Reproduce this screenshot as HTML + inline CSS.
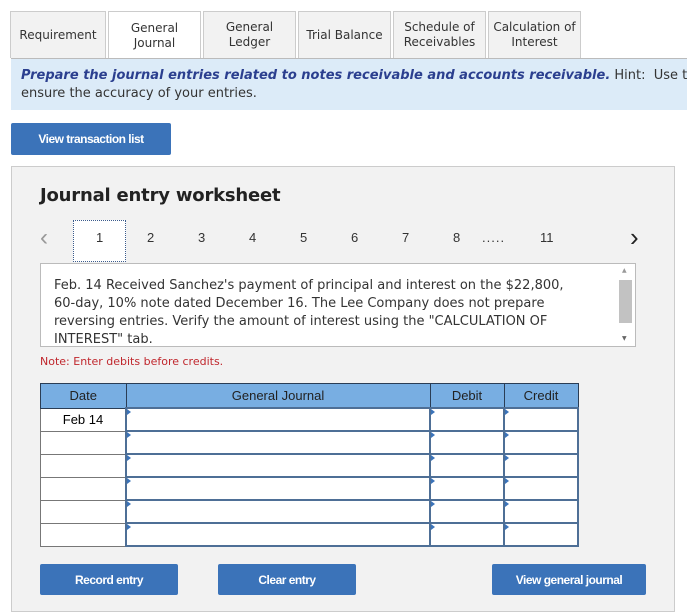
<!DOCTYPE html>
<html><head><style>
body{margin:0;width:687px;height:615px;background:#fff;font-family:"DejaVu Sans","Liberation Sans",sans-serif;position:relative;overflow:hidden}
.a{position:absolute}
.tab{position:absolute;top:11px;height:47px;background:#f2f2f2;border:1px solid #ccc;border-bottom:none;box-sizing:border-box;font-size:12px;color:#333;display:flex;align-items:center;justify-content:center;text-align:center;line-height:15px}
.btn{position:absolute;background:#3b73b9;color:#fff;font-family:"Liberation Sans",sans-serif;font-weight:bold;font-size:12px;letter-spacing:-0.5px;display:flex;align-items:center;justify-content:center;border-radius:2px}
.pg{position:absolute;top:230px;font-family:"Liberation Sans",sans-serif;font-size:13px;color:#333}
table{position:absolute;left:40px;top:383px;border-collapse:collapse;font-family:"Liberation Sans",sans-serif;font-size:13px}
td,th{padding:0;height:21px}
th{background:#78aee2;font-weight:normal;color:#222;border:1px solid #2a3d55;height:23px}
td.d{border:1px solid #777;background:#fff;text-align:center;width:84px}
td.i{border:2px solid #4e6f96;background:#fff;position:relative}
td.i:before{content:"";position:absolute;left:0;top:0;border-left:4px solid #3b73b9;border-top:3px solid transparent;border-bottom:3px solid transparent}
</style></head><body>
<div class="tab" style="left:10px;width:96px">Requirement</div>
<div class="tab" style="left:108px;width:93px;background:#fff;height:48px">General<br>Journal</div>
<div class="tab" style="left:203px;width:93px">General<br>Ledger</div>
<div class="tab" style="left:298px;width:93px">Trial Balance</div>
<div class="tab" style="left:393px;width:93px">Schedule of<br>Receivables</div>
<div class="tab" style="left:488px;width:93px">Calculation of<br>Interest</div>
<div class="a" style="left:11px;top:58px;width:676px;height:52px;background:#dcebf8;border-top:1px solid #bbb;box-sizing:border-box"></div>
<div class="a" style="left:21px;top:67px;font-size:13px;line-height:18px;color:#333;white-space:nowrap"><b><i style="color:#2b3f8f">Prepare the journal entries related to notes receivable and accounts receivable.</i></b> Hint:&nbsp; Use the<br>ensure the accuracy of your entries.</div>
<div class="btn" style="left:11px;top:123px;width:160px;height:32px">View transaction list</div>
<div class="a" style="left:11px;top:166px;width:664px;height:446px;background:#f2f2f2;border:1px solid #ccc;box-sizing:border-box"></div>
<div class="a" style="left:40px;top:185px;font-size:18px;font-weight:bold;color:#222;letter-spacing:-0.2px">Journal entry worksheet</div>
<div class="a" style="left:40px;top:224px;font-size:24px;color:#999;font-family:'Liberation Sans',sans-serif">‹</div>
<div class="a" style="left:73px;top:220px;width:53px;height:42px;background:#fff;border:1px dotted #3b5b8c;box-sizing:border-box"></div>
<div class="pg" style="left:96px">1</div><div class="pg" style="left:147px">2</div><div class="pg" style="left:198px">3</div><div class="pg" style="left:249px">4</div><div class="pg" style="left:300px">5</div><div class="pg" style="left:351px">6</div><div class="pg" style="left:402px">7</div><div class="pg" style="left:453px">8</div><div class="pg" style="left:482px;letter-spacing:1px">.....</div><div class="pg" style="left:540px">11</div>
<div class="a" style="left:630px;top:222px;font-size:26px;color:#222;font-family:'Liberation Sans',sans-serif">›</div>
<div class="a" style="left:40px;top:263px;width:596px;height:84px;background:#fff;border:1px solid #bbb;box-sizing:border-box;overflow:hidden"><div style="position:absolute;left:13px;top:13px;font-size:13px;line-height:18px;color:#333;width:525px">Feb. 14 Received Sanchez's payment of principal and interest on the $22,800, 60-day, 10% note dated December 16. The Lee Company does not prepare reversing entries. Verify the amount of interest using the "CALCULATION OF INTEREST" tab.</div></div>
<div class="a" style="left:619px;top:280px;width:13px;height:43px;background:#c2c2c2"></div>
<div class="a" style="left:622px;top:267px;font-size:6px;color:#999">▲</div>
<div class="a" style="left:622px;top:335px;font-size:6px;color:#666">▼</div>
<div class="a" style="left:40px;top:355px;font-size:11px;color:#c0272d">Note: Enter debits before credits.</div>
<table>
<tr><th style="width:84px">Date</th><th style="width:303px">General Journal</th><th style="width:73px">Debit</th><th style="width:73px">Credit</th></tr>
<tr><td class="d">Feb 14</td><td class="i"></td><td class="i"></td><td class="i"></td></tr>
<tr><td class="d"></td><td class="i"></td><td class="i"></td><td class="i"></td></tr>
<tr><td class="d"></td><td class="i"></td><td class="i"></td><td class="i"></td></tr>
<tr><td class="d"></td><td class="i"></td><td class="i"></td><td class="i"></td></tr>
<tr><td class="d"></td><td class="i"></td><td class="i"></td><td class="i"></td></tr>
<tr><td class="d"></td><td class="i"></td><td class="i"></td><td class="i"></td></tr>
</table>
<div class="btn" style="left:40px;top:564px;width:138px;height:31px">Record entry</div>
<div class="btn" style="left:218px;top:564px;width:138px;height:31px">Clear entry</div>
<div class="btn" style="left:492px;top:564px;width:154px;height:31px">View general journal</div>
</body></html>
